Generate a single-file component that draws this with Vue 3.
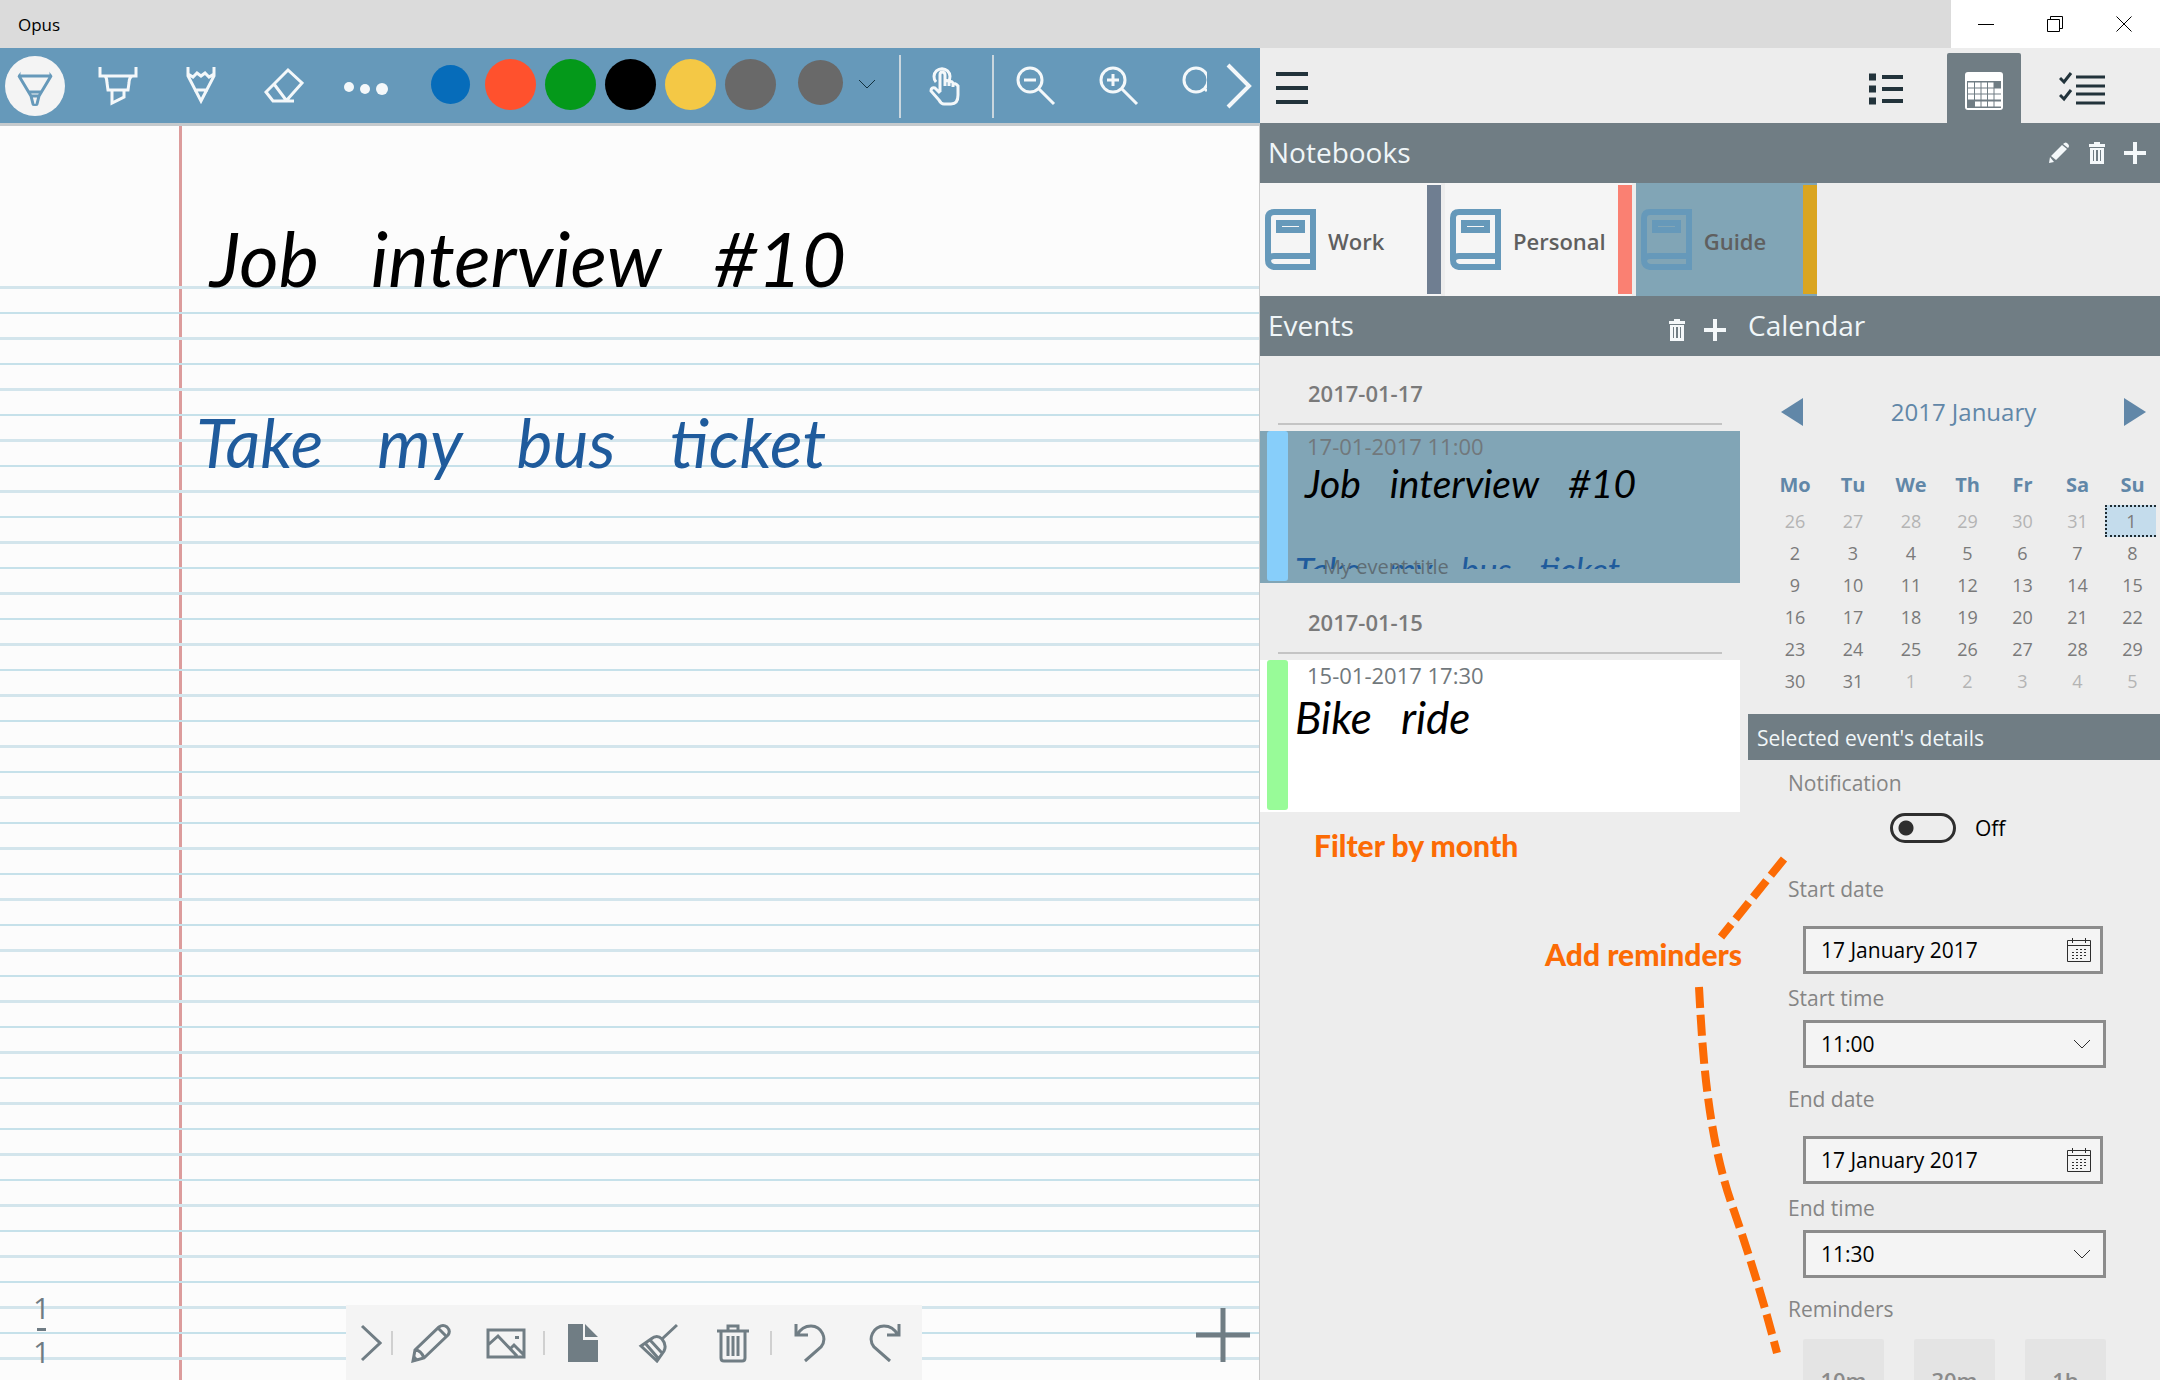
<script setup>
import { ref } from 'vue'

const swatches = [
  { name: 'Blue', color: '#066cba', small: true },
  { name: 'Red', color: '#ff512d' },
  { name: 'Green', color: '#04991a' },
  { name: 'Black', color: '#000000' },
  { name: 'Yellow', color: '#f4c845' },
  { name: 'Grey', color: '#696969' }
]

const notebooks = [
  { name: 'Work', color: '#6f7e91' },
  { name: 'Personal', color: '#fa8072' },
  { name: 'Guide', color: '#daa520', active: true }
]

const events = [
  {
    day: '2017-01-17',
    time: '17-01-2017 11:00',
    ink: ['Job', 'interview', '#10'],
    more: ['Take', 'my', 'bus', 'ticket'],
    title: 'My event title',
    color: '#87cefa',
    active: true
  },
  { day: '2017-01-15', time: '15-01-2017 17:30', ink: ['Bike', 'ride'], color: '#98fb98' }
]

const weekdays = ['Mo', 'Tu', 'We', 'Th', 'Fr', 'Sa', 'Su']
const weeks = Array.from({ length: 6 }, (_, w) =>
  Array.from({ length: 7 }, (_, d) => {
    const n = w * 7 + d - 5
    if (n < 1) return { day: n + 31, out: true }
    if (n > 31) return { day: n - 31, out: true }
    return { day: n, selected: n === 1 }
  })
)

const notify = ref(false)
const startDate = ref('17 January 2017')
const endDate = ref('17 January 2017')
const startTime = ref('11:00')
const endTime = ref('11:30')
const times = ['10:30', '11:00', '11:30', '12:00']
const reminders = ['10m', '30m', '1h']
</script>

<template>
  <div class="window">
    <header class="titlebar">
      <span class="app-name">Opus</span>
      <div class="window-buttons">
        <button aria-label="Minimize">
          <svg width="16" height="16" viewBox="0 0 16 16"><path d="M0 8.500H16" /></svg>
        </button>
        <button aria-label="Restore">
          <svg width="16" height="16" viewBox="0 0 16 16"><path d="M.5 3.500H12.500V15.500H.5ZM3.500 3.500V.5H15.500V12.500H12.500" /></svg>
        </button>
        <button aria-label="Close">
          <svg width="16" height="16" viewBox="0 0 16 16"><path d="M.5 .5L15.500 15.500M15.500 .5L.5 15.500" /></svg>
        </button>
      </div>
    </header>

    <div class="panes">
      <section class="editor">
        <nav class="toolbar" aria-label="Drawing tools">
          <div class="tools">
            <button class="tool on" aria-label="Pen">
              <svg width="40" height="40" viewBox="0 0 40 40">
                <path d="M4 1V11M36 1V11M4 10H36L24 30L22 38Q20 41 18 38L16 30L4 10M13 26H27M16 30H24" />
              </svg>
            </button>
            <button class="tool" aria-label="Highlighter">
              <svg width="40" height="40" viewBox="0 0 40 40">
                <path d="M2 1V10H38V1M7 10Q9 12 9 17L10 24H30L31 17Q31 12 34 10M14 24V37L26 31V24" />
              </svg>
            </button>
            <button class="tool" aria-label="Pencil">
              <svg width="40" height="40" viewBox="0 0 40 40">
                <path d="M7 1V10L20 35L33 10V1M7 8L12 11L16 7L20 10L24 7L28 11L33 8M13 24H27" />
              </svg>
            </button>
            <button class="tool" aria-label="Eraser">
              <svg width="40" height="40" viewBox="0 0 40 40">
                <path d="M24 4L38 17L22 35H9L2 26Z M10 18L22 34M21 35H30" />
              </svg>
            </button>
            <button class="tool dots" aria-label="More pens">
              <svg width="48" height="40" viewBox="0 0 48 40">
                <circle cx="6" cy="21" r="5" /><circle cx="22" cy="23" r="5" /><circle cx="39" cy="23" r="6" />
              </svg>
            </button>
          </div>
          <div class="swatches">
            <button v-for="s in swatches" :key="s.name" class="slot" :aria-label="s.name">
              <span class="swatch" :class="{ small: s.small }" :style="{ background: s.color }"></span>
            </button>
          </div>
          <button class="custom" aria-label="Custom colour">
            <span class="swatch medium"></span>
            <svg width="18" height="10" viewBox="0 0 18 10"><path d="M1 1L9 9L17 1" /></svg>
          </button>
          <span class="rule"></span>
          <button class="tool wide" aria-label="Touch mode">
            <svg width="36" height="40" viewBox="2 0 36 40">
              <path d="M11 16A8 8 0 1 1 23 16M15 26V9Q15 6 17 6Q20 6 20 9V20V16Q22 13 24 16V20V17Q26 14 28 17V21V19Q30 16 33 20V29Q33 38 26 38H19Q16 38 14 34L6 25Q6 21 10 22L15 27M15 16V9" />
            </svg>
          </button>
          <span class="rule"></span>
          <button class="tool zoomer" aria-label="Zoom out">
            <svg width="40" height="40" viewBox="0 0 40 40"><circle cx="14" cy="14" r="12" /><path d="M23 23L38 38M8 14H20" /></svg>
          </button>
          <button class="tool zoomer" aria-label="Zoom in">
            <svg width="40" height="40" viewBox="0 0 40 40"><circle cx="14" cy="14" r="12" /><path d="M23 23L38 38M8 14H20M14 8V20" /></svg>
          </button>
          <button class="tool cut" aria-label="Reset zoom">
            <svg width="25" height="40" viewBox="0 0 25 40"><circle cx="14" cy="14" r="12" /><path d="M22 22L25 25" /></svg>
          </button>
          <button class="tool next" aria-label="Scroll tools">
            <svg width="26" height="46" viewBox="0 0 26 46"><path d="M2 2L23 23L2 44" /></svg>
          </button>
        </nav>

        <div class="paper">
          <div class="ruled">
            <p class="ink"><span>Job</span><span>interview</span><span>#10</span></p>
            <p class="ink blue"><span>Take</span><span>my</span><span>bus</span><span>ticket</span></p>
          </div>
          <p class="page-number"><span>1</span><span class="dash"></span><span>1</span></p>
          <nav class="page-tools" aria-label="Page tools">
            <button class="fold" aria-label="Collapse">
              <svg width="22" height="40" viewBox="0 0 22 40"><path d="M2 3L20 20L2 37" /></svg>
            </button>
            <span class="tick"></span>
            <button aria-label="Write">
              <svg width="40" height="40" viewBox="0 0 40 40">
                <path d="M2 38L4 27L28 4Q32 1 36 4Q40 8 37 12L13 35ZM4 27Q10 27 13 35M27 5L36 14" />
                <path class="solid" d="M1 39L3 32L8 37Z" />
              </svg>
            </button>
            <button aria-label="Insert picture">
              <svg width="40" height="40" viewBox="0 0 40 40">
                <path d="M2 7H38V34H2ZM2 22L12 13L31 33M24 26L28 22L38 32" /><rect class="solid" x="29" y="13" width="4" height="3" />
              </svg>
            </button>
            <span class="tick"></span>
            <button aria-label="Page">
              <svg width="32" height="40" viewBox="0 0 32 40"><path class="solid" d="M1 1H16V17H31V39H1ZM18 1L31 14H18Z" /></svg>
            </button>
            <button aria-label="Clean">
              <svg width="40" height="40" viewBox="0 0 40 40">
                <path d="M39 2L24 16M3 23L13 16Q19 11 24 16Q29 22 26 28L19 38ZM7 20L20 35M12 17L24 30" />
              </svg>
            </button>
            <button aria-label="Delete page">
              <svg width="34" height="40" viewBox="0 0 34 40">
                <path d="M1 8H33M12 7V3H22V7M5 8V35Q5 38 8 38H26Q29 38 29 35V8M12 13V33M17 13V33M22 13V33" />
              </svg>
            </button>
            <span class="tick"></span>
            <button aria-label="Undo">
              <svg width="34" height="40" viewBox="0 0 34 40"><path d="M3 1V12H15M4 12Q9 3 18 3A13 13 0 0 1 28 24L12 38" /></svg>
            </button>
            <button aria-label="Redo">
              <svg width="34" height="40" viewBox="0 0 34 40"><path d="M31 1V12H19M30 12Q25 3 16 3A13 13 0 0 0 6 24L22 38" /></svg>
            </button>
          </nav>
          <button class="add-page" aria-label="Add page">
            <svg width="54" height="54" viewBox="0 0 54 54"><path d="M27 0V54M0 27H54" /></svg>
          </button>
        </div>
      </section>

      <section class="organizer">
        <nav class="views" aria-label="Views">
          <button class="menu" aria-label="Menu">
            <svg width="32" height="34" viewBox="0 0 32 34"><path d="M0 3H32M0 17H32M0 31H32" /></svg>
          </button>
          <button class="view" aria-label="List">
            <svg width="34" height="32" viewBox="0 0 34 32">
              <path d="M13 4H34M13 16H34M13 28H34" /><path class="fat" d="M0 4H7M0 16H7M0 28H7" />
            </svg>
          </button>
          <button class="view current" aria-label="Calendar">
            <svg width="40" height="40" viewBox="0 0 40 40">
              <rect x="1" y="1" width="38" height="38" rx="3" fill="#fff" />
              <path d="M3 10H37V37H3Z" fill="#707d84" stroke="none" />
              <path d="M4 14H30M4 20H37M4 26H37M11 33H37" stroke="#fff" stroke-width="5" />
              <path d="M10.500 10V37M17 10V37M23.500 10V37M30 10V37" stroke="#707d84" stroke-width="1" />
            </svg>
          </button>
          <button class="view" aria-label="Tasks">
            <svg width="46" height="34" viewBox="0 0 46 34">
              <path d="M17 5H46M17 14H46M17 22H46M17 31H46M1 6L5 10L12 1M1 23L5 27L12 18" />
            </svg>
          </button>
        </nav>

        <header class="bar">
          <h2>Notebooks</h2>
          <div class="actions">
            <button aria-label="Rename notebook">
              <svg width="22" height="22" viewBox="0 0 22 22"><path d="M1 21L2 15L6 20ZM3 14L14 3L19 7L8 18ZM15 2Q18-1 20 2Q22 4 20 6Z" /></svg>
            </button>
            <button aria-label="Delete notebook">
              <svg width="16" height="22" viewBox="0 0 16 22"><path fill-rule="evenodd" d="M5 0H11V2H16V5H0V2H5ZM1 6H15V22H1ZM4 8V19H5V8ZM7 8V19H9V8ZM11 8V19H12V8Z" /></svg>
            </button>
            <button aria-label="Add notebook">
              <svg width="22" height="22" viewBox="0 0 22 22"><path d="M9 0H13V9H22V13H13V22H9V13H0V9H9Z" /></svg>
            </button>
          </div>
        </header>

        <div class="notebooks">
          <button v-for="n in notebooks" :key="n.name" class="notebook" :class="{ active: n.active }">
            <svg width="51" height="61" viewBox="0 0 51 61">
              <path d="M48 58H9Q3 57 3 51V9Q3 3 9 3H48ZM3 51Q4 47 9 47H48" />
              <path d="M14 14H37V21H14Z" />
            </svg>
            <span class="label">{{ n.name }}</span>
            <span class="spine" :style="{ background: n.color }"></span>
          </button>
        </div>

        <div class="columns">
          <div class="events">
            <header class="bar">
              <h2>Events</h2>
              <div class="actions near">
                <button aria-label="Delete event">
                  <svg width="16" height="22" viewBox="0 0 16 22"><path fill-rule="evenodd" d="M5 0H11V2H16V5H0V2H5ZM1 6H15V22H1ZM4 8V19H5V8ZM7 8V19H9V8ZM11 8V19H12V8Z" /></svg>
                </button>
                <button aria-label="Add event">
                  <svg width="22" height="22" viewBox="0 0 22 22"><path d="M9 0H13V9H22V13H13V22H9V13H0V9H9Z" /></svg>
                </button>
              </div>
            </header>
            <ul class="list">
              <li v-for="e in events" :key="e.day">
                <h3>{{ e.day }}</h3>
                <article class="card" :class="{ active: e.active }">
                  <span class="stripe" :style="{ background: e.color }"></span>
                  <div class="preview">
                    <time>{{ e.time }}</time>
                    <p class="mini" :class="{ short: !e.active }"><span v-for="w in e.ink" :key="w">{{ w }}</span></p>
                    <p v-if="e.more" class="mini more"><span v-for="w in e.more" :key="w">{{ w }}</span></p>
                  </div>
                  <p v-if="e.title" class="caption">{{ e.title }}</p>
                </article>
              </li>
            </ul>
            <strong class="note">Filter by month</strong>
          </div>

          <aside class="side">
            <header class="bar flush"><h2>Calendar</h2></header>
            <div class="month">
              <button aria-label="Previous month"><svg width="22" height="28" viewBox="0 0 22 28"><path d="M0 14L22 0V28Z" /></svg></button>
              <span>2017 January</span>
              <button aria-label="Next month"><svg width="22" height="28" viewBox="0 0 22 28"><path d="M22 14L0 0V28Z" /></svg></button>
            </div>
            <table class="days">
              <thead>
                <tr><th v-for="d in weekdays" :key="d" scope="col">{{ d }}</th></tr>
              </thead>
              <tbody>
                <tr v-for="(week, i) in weeks" :key="i">
                  <td v-for="c in week" :key="c.day" :class="{ out: c.out }">
                    <span :class="{ selected: c.selected }">{{ c.day }}</span>
                  </td>
                </tr>
              </tbody>
            </table>

            <h3 class="details-title">Selected event's details</h3>
            <form class="details" @submit.prevent>
              <label for="notify">Notification</label>
              <div class="switch">
                <input id="notify" v-model="notify" type="checkbox" role="switch" />
                <span>{{ notify ? 'On' : 'Off' }}</span>
              </div>

              <label for="start-date">Start date</label>
              <div class="field date">
                <input id="start-date" v-model="startDate" type="text" />
                <svg width="24" height="24" viewBox="0 0 24 24">
                  <path d="M.5 2.500H23.500V23.500H.5ZM.5 7.500H23.500M5.500 0V5M18.500 0V5" />
                  <path class="grid" d="M9 11.500H21M5 14.500H21M5 17.500H21M5 20.500H17" />
                </svg>
              </div>
              <label for="start-time">Start time</label>
              <div class="field">
                <select id="start-time" v-model="startTime"><option v-for="t in times" :key="t">{{ t }}</option></select>
                <svg width="18" height="10" viewBox="0 0 18 10"><path d="M1 1L9 9L17 1" /></svg>
              </div>

              <label for="end-date" class="spaced">End date</label>
              <div class="field date">
                <input id="end-date" v-model="endDate" type="text" />
                <svg width="24" height="24" viewBox="0 0 24 24">
                  <path d="M.5 2.500H23.500V23.500H.5ZM.5 7.500H23.500M5.500 0V5M18.500 0V5" />
                  <path class="grid" d="M9 11.500H21M5 14.500H21M5 17.500H21M5 20.500H17" />
                </svg>
              </div>
              <label for="end-time">End time</label>
              <div class="field">
                <select id="end-time" v-model="endTime"><option v-for="t in times" :key="t">{{ t }}</option></select>
                <svg width="18" height="10" viewBox="0 0 18 10"><path d="M1 1L9 9L17 1" /></svg>
              </div>

              <p class="spaced">Reminders</p>
              <div class="reminders">
                <button v-for="r in reminders" :key="r" type="button">{{ r }}</button>
              </div>
            </form>

            <div class="hint">
              <strong>Add reminders</strong>
              <svg width="250" height="510" viewBox="0 0 250 510">
                <path d="M174 14L111 92" />
                <path d="M89 142C92 196 96 286 122 360C142 418 154 458 167 508" />
              </svg>
            </div>
          </aside>
        </div>
      </section>
    </div>
  </div>
</template>

<style>
body {
  background: #ededed;
}
</style>

<style scoped>
.window {
  height: 100vh;
  display: flex;
  flex-direction: column;
  overflow: hidden;
  font-family: "Open Sans", "Noto Sans", sans-serif;
  background: #ededed;
}
h2, h3, p, ul {
  margin: 0;
  padding: 0;
  font-weight: 400;
  list-style: none;
}
button {
  display: flex;
  align-items: center;
  justify-content: center;
  margin: 0;
  padding: 0;
  border: 0;
  background: none;
  font: inherit;
  color: inherit;
}
svg {
  display: block;
  flex: none;
  fill: none;
}

.titlebar {
  flex: none;
  display: flex;
  justify-content: space-between;
  height: 48px;
  background: #dbdbdb;
}
.app-name {
  padding-left: 18px;
  font-size: 17px;
  line-height: 50px;
}
.window-buttons {
  display: flex;
  padding-right: 2px;
  background: #fff;
}
.window-buttons button {
  width: 69px;
}
.window-buttons svg {
  stroke: #000;
  stroke-width: 1;
}

.panes {
  flex: 1;
  min-height: 0;
  display: grid;
  grid-template-columns: 7fr 5fr;
}
.editor,
.organizer {
  min-width: 0;
  min-height: 0;
  display: flex;
  flex-direction: column;
}

.toolbar {
  flex: none;
  display: flex;
  align-items: stretch;
  height: 75px;
  background: #6699ba;
  border-bottom: 3px solid #c5cacd;
}
.tools {
  display: flex;
  gap: 13px;
}
.tool {
  flex: none;
  width: 70px;
}
.tool svg {
  stroke: #f4f8fa;
  stroke-width: 3;
}
.tool.on svg {
  box-sizing: content-box;
  padding: 10px;
  border-radius: 50%;
  background: #f4f4f4;
  stroke: #6699ba;
}
.dots svg {
  fill: #f4f8fa;
  stroke: none;
}
.swatches {
  display: flex;
  margin-left: 18px;
}
.slot {
  width: 60px;
}
.swatch {
  width: 51px;
  height: 51px;
  margin-bottom: 3px;
  border-radius: 50%;
}
.swatch.small {
  width: 39px;
  height: 39px;
}
.swatch.medium {
  width: 45px;
  height: 45px;
  background: #696969;
}
.custom {
  gap: 15px;
  margin: 0 23px 4px 18px;
}
.custom svg {
  stroke: #12313f;
  stroke-width: 1;
}
.rule {
  width: 2px;
  margin: 7px 0 5px;
  background: #c9d6de;
}
.wide {
  width: 88px;
  margin-right: 3px;
}
.zoomer {
  width: 83px;
}
.cut {
  width: 47px;
  justify-content: flex-end;
}
.next {
  width: auto;
  margin: 0 8px 0 auto;
}
.next svg {
  stroke-width: 4;
}

.paper {
  position: relative;
  flex: 1;
  min-height: 0;
  border-right: 1px solid #c9c9c9;
  background: linear-gradient(#dc9c9c, #dc9c9c) 179px 0 / 3px 100% no-repeat #fcfcfc;
}
.ruled {
  height: 100%;
  box-sizing: border-box;
  padding-top: 160px;
  background: linear-gradient(#d3e5ec 0 3px, transparent 3px 26px, #c6e1ea 26px 28px, transparent 28px) 0 0 / 100% 51px content-box content-box;
}
.ink,
.mini {
  display: flex;
  font-family: Lato, "Open Sans", sans-serif;
  font-style: italic;
  color: #000;
}
.ink {
  gap: 52px;
  margin: -68px 0 104px 210px;
  font-size: 76px;
  line-height: 80px;
}
.ink.blue {
  gap: 54px;
  margin: 0 0 0 196px;
  font-size: 68px;
  color: #1f5b9c;
}
.page-number {
  position: absolute;
  left: 33px;
  bottom: 8px;
  display: flex;
  flex-direction: column;
  align-items: center;
  font-size: 30px;
  line-height: 41px;
  color: #6f7c84;
}
.dash {
  width: 9px;
  height: 3px;
  background: #6f7c84;
}
.page-tools {
  position: absolute;
  left: 346px;
  bottom: 0;
  display: flex;
  align-items: center;
  height: 75px;
  background: #f4f4f4;
}
.page-tools button {
  width: 75px;
  height: 75px;
}
.page-tools .fold {
  width: 45px;
  padding-left: 4px;
}
.page-tools svg {
  stroke: #707d84;
  stroke-width: 3;
}
.page-tools .solid {
  fill: #707d84;
  stroke: none;
}
.tick {
  width: 2px;
  height: 24px;
  background: #d0d0d0;
}
.add-page {
  position: absolute;
  right: 9px;
  bottom: 18px;
}
.add-page svg {
  stroke: #707d84;
  stroke-width: 5;
}

.views {
  flex: none;
  display: flex;
  height: 75px;
  padding-right: 17px;
}
.menu {
  margin: 4px auto 0 16px;
}
.menu svg,
.view svg {
  stroke: #22333b;
  stroke-width: 4;
}
.view {
  width: 74px;
  margin-top: 5px;
  margin-right: 24px;
  padding-top: 2px;
}
.view .fat {
  stroke-width: 7;
}
.view.current {
  border-radius: 2px 2px 0 0;
  background: #707d84;
}
.view.current svg {
  margin-top: 4px;
  stroke: none;
}
.view:last-child svg {
  stroke-width: 3;
}

.bar {
  flex: none;
  display: flex;
  align-items: center;
  justify-content: space-between;
  height: 60px;
  box-sizing: border-box;
  padding: 0 14px 0 8px;
  background: #707d84;
  color: #f0f6f8;
}
.bar h2 {
  padding-bottom: 2px;
  font-size: 28px;
  line-height: 58px;
}
.bar.flush {
  padding-left: 0;
}
.actions {
  display: flex;
  gap: 19px;
}
.actions.near {
  margin: 8px 8px 0 0;
}
.actions svg {
  fill: #f4f8fa;
}

.notebooks {
  flex: none;
  display: flex;
  gap: 4px;
  height: 113px;
}
.notebook {
  min-width: 181px;
  padding-left: 5px;
  background: #f5f5f5;
  font-size: 22px;
  font-weight: 600;
  color: #5f5f5f;
}
.notebook svg {
  stroke: #6699ba;
  stroke-width: 6;
}
.notebook .label {
  margin: 3px auto 0 12px;
}
.spine {
  align-self: stretch;
  width: 14px;
  margin: 2px 0 2px 12px;
}
.notebook.active {
  background: #81a5b6;
}

.columns {
  flex: 1;
  min-height: 0;
  display: flex;
}
.events {
  flex: 1;
  min-width: 0;
}
.list {
  display: flex;
  flex-direction: column;
  gap: 2px;
  padding-right: 8px;
}
.list h3 {
  height: 42px;
  margin: 0 18px 6px;
  padding: 25px 30px 0;
  border-bottom: 2px solid #c4c4c4;
  font-size: 22px;
  line-height: 25px;
  font-weight: 600;
  color: #7a7a7a;
}
.card {
  position: relative;
  display: flex;
  height: 152px;
  background: #fff;
}
.card.active {
  background: #81a5b6;
}
.stripe {
  width: 21px;
  margin: 0 7px 2px;
  border-radius: 3px;
}
.preview {
  flex: 1;
  height: 138px;
  overflow: hidden;
}
.preview time {
  display: block;
  padding-left: 12px;
  font-size: 22px;
  line-height: 30px;
  color: #71787c;
}
.mini {
  gap: 29px;
  padding-left: 10px;
  font-size: 39px;
  line-height: 44px;
}
.mini.short {
  padding-left: 0;
  font-size: 44px;
  line-height: 54px;
}
.mini.more {
  gap: 28px;
  padding: 42px 0 0;
  font-size: 35px;
  color: #1f5b9c;
}
.caption {
  position: absolute;
  left: 63px;
  bottom: 2px;
  font-size: 20px;
  line-height: 28px;
  color: #5f6d75;
}
.note,
.hint {
  font-family: Lato, "Open Sans", sans-serif;
  font-size: 30px;
  line-height: 34px;
  font-weight: 900;
  color: #fc6b05;
}
.note {
  display: block;
  padding: 16px 0 0 54px;
}

.side {
  position: relative;
  flex: none;
  width: 412px;
}
.month {
  display: flex;
  align-items: center;
  justify-content: space-between;
  height: 112px;
  padding: 0 14px 0 33px;
  font-size: 24px;
  color: #6187a8;
}
.month span {
  padding-bottom: 2px;
}
.month svg {
  fill: #6187a8;
}
.days {
  width: 394px;
  margin: 0 0 17px 18px;
  border-collapse: collapse;
  table-layout: fixed;
  text-align: center;
  font-size: 18px;
  color: #7a7a7a;
}
.days th {
  height: 34px;
  padding: 0 0 3px;
  font-size: 20px;
  line-height: 30px;
  font-weight: 700;
  color: #6187a8;
}
.days th:nth-child(-n + 3) {
  width: 58px;
}
.days td {
  height: 32px;
  padding: 0;
  line-height: 32px;
}
.days .out {
  color: #b4b4b4;
}
.days .selected {
  display: block;
  height: 28px;
  margin-right: 4px;
  border: 2px dotted #1d2b33;
  border-right: 0;
  background: #c4dcec;
  line-height: 28px;
}

.details-title {
  padding: 2px 9px 0;
  background: #707d84;
  font-size: 21px;
  line-height: 44px;
  color: #f0f6f8;
}
.details {
  padding: 9px 0 0 40px;
  font-size: 21px;
  line-height: 28px;
  color: #000;
}
.details label,
.details p {
  display: block;
  color: #858585;
}
.details .spaced {
  margin-top: 17px;
}
.switch {
  display: flex;
  align-items: center;
  gap: 19px;
  height: 30px;
  margin: 16px 0 32px 102px;
}
.switch input {
  appearance: none;
  width: 66px;
  height: 30px;
  margin: 0;
  border: 3px solid #2e2e2e;
  border-radius: 15px;
  background: radial-gradient(circle at 13px 12px, #2e2e2e 7px, transparent 8px);
}
.field {
  display: flex;
  align-items: center;
  justify-content: space-between;
  width: 303px;
  height: 48px;
  box-sizing: border-box;
  margin: 8px 0 10px 15px;
  padding: 0 12px 0 15px;
  border: 3px solid #8c8c8c;
  background: #f4f4f4;
}
.field.date {
  width: 300px;
  margin-top: 23px;
  padding-right: 9px;
}
.field input,
.field select {
  appearance: none;
  flex: 1;
  min-width: 0;
  padding: 0;
  border: 0;
  background: none;
  font: inherit;
  color: #000;
}
.field svg {
  stroke: #2e2e2e;
  stroke-width: 1;
}
.field .grid {
  stroke-dasharray: 2 2;
}
.reminders {
  display: flex;
  gap: 30px;
  margin: 16px 0 0 15px;
}
.reminders button {
  width: 81px;
  height: 81px;
  border-radius: 2px;
  background: #e4e4e4;
  font-size: 22px;
  font-weight: 600;
  color: #8a8a8a;
}

.hint {
  position: absolute;
  left: -203px;
  top: 549px;
  pointer-events: none;
}
.hint strong {
  position: absolute;
  left: 0;
  top: 92px;
  font-weight: 900;
  white-space: nowrap;
}
.hint svg {
  margin-left: 65px;
  stroke: #fc6b05;
  stroke-width: 8;
  stroke-dasharray: 21 7;
}
</style>
